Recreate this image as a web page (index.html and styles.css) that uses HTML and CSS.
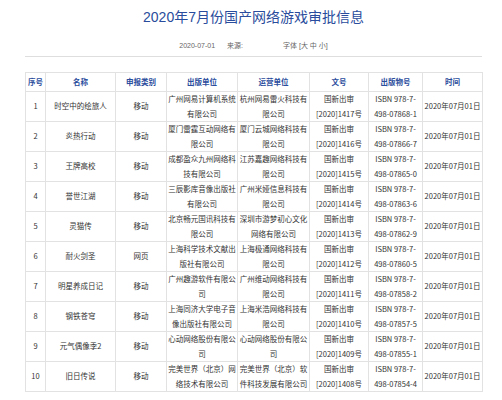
FILE: index.html
```html
<!DOCTYPE html>
<html lang="zh-CN">
<head>
<meta charset="utf-8">
<title>2020年7月份国产网络游戏审批信息</title>
<link rel="stylesheet" href="styles.css">
</head>
<body>
<div class="page">
  <h1 class="title">2020年7月份国产网络游戏审批信息</h1>
  <div class="meta">
    <span class="date">2020-07-01</span>
    <span class="source">来源:</span>
    <span class="fontsize">字体 [大 中 小]</span>
  </div>
  <table class="list">
    <colgroup>
      <col class="c1"><col class="c2"><col class="c3"><col class="c4"><col class="c5"><col class="c6"><col class="c7"><col class="c8">
    </colgroup>
    <thead>
      <tr><th>序号</th><th>名称</th><th>申报类别</th><th>出版单位</th><th>运营单位</th><th>文号</th><th>出版物号</th><th>时间</th></tr>
    </thead>
    <tbody>
      <tr><td>1</td><td>时空中的绘旅人</td><td>移动</td><td>广州网易计算机系统有限公司</td><td>杭州网易雷火科技有限公司</td><td>国新出审<br>[2020]1417号</td><td>ISBN 978-7-<br>498-07868-1</td><td>2020年07月01日</td></tr>
      <tr><td>2</td><td>炎热行动</td><td>移动</td><td>厦门雷霆互动网络有限公司</td><td>厦门云城网络科技有限公司</td><td>国新出审<br>[2020]1416号</td><td>ISBN 978-7-<br>498-07866-7</td><td>2020年07月01日</td></tr>
      <tr><td>3</td><td>王牌高校</td><td>移动</td><td>成都盈众九州网络科技有限公司</td><td>江苏嘉趣网络科技有限公司</td><td>国新出审<br>[2020]1415号</td><td>ISBN 978-7-<br>498-07865-0</td><td>2020年07月01日</td></tr>
      <tr><td>4</td><td>誉世江湖</td><td>移动</td><td>三辰影库音像出版社有限公司</td><td>广州米娅信息科技有限公司</td><td>国新出审<br>[2020]1414号</td><td>ISBN 978-7-<br>498-07863-6</td><td>2020年07月01日</td></tr>
      <tr><td>5</td><td>灵猫传</td><td>移动</td><td>北京畅元国讯科技有限公司</td><td>深圳市游梦初心文化网络有限公司</td><td>国新出审<br>[2020]1413号</td><td>ISBN 978-7-<br>498-07862-9</td><td>2020年07月01日</td></tr>
      <tr><td>6</td><td>耐火剑圣</td><td>网页</td><td>上海科学技术文献出版社有限公司</td><td>上海极通网络科技有限公司</td><td>国新出审<br>[2020]1412号</td><td>ISBN 978-7-<br>498-07860-5</td><td>2020年07月01日</td></tr>
      <tr><td>7</td><td>明星养成日记</td><td>移动</td><td>广州趣游软件有限公司</td><td>广州维动网络科技有限公司</td><td>国新出审<br>[2020]1411号</td><td>ISBN 978-7-<br>498-07858-2</td><td>2020年07月01日</td></tr>
      <tr><td>8</td><td>钢铁苍穹</td><td>移动</td><td>上海同济大学电子音像出版社有限公司</td><td>上海米浩网络科技有限公司</td><td>国新出审<br>[2020]1410号</td><td>ISBN 978-7-<br>498-07857-5</td><td>2020年07月01日</td></tr>
      <tr><td>9</td><td>元气偶像季2</td><td>移动</td><td>心动网络股份有限公司</td><td>心动网络股份有限公司</td><td>国新出审<br>[2020]1409号</td><td>ISBN 978-7-<br>498-07855-1</td><td>2020年07月01日</td></tr>
      <tr><td>10</td><td>旧日传说</td><td>移动</td><td>完美世界（北京）网络技术有限公司</td><td>完美世界（北京）软件科技发展有限公司</td><td>国新出审<br>[2020]1408号</td><td>ISBN 978-7-<br>498-07854-4</td><td>2020年07月01日</td></tr>
    </tbody>
  </table>
</div>
</body>
</html>
```

FILE: styles.css
```css
html, body {
  margin: 0;
  padding: 0;
  background: #ffffff;
}

body {
  font-family: "Liberation Sans", "Noto Sans CJK SC", sans-serif;
  color: #333333;
}

.page {
  width: 457px;
  margin-left: 25px;
  padding-top: 7px;
}

.title {
  margin: 0;
  font-size: 14px;
  line-height: 20px;
  font-weight: normal;
  color: #2a4c9c;
  text-align: center;
}

.meta {
  display: flex;
  justify-content: center;
  align-items: center;
  margin-top: 13px;
  padding-bottom: 4px;
  border-bottom: 1px solid #dedede;
  font-size: 7px;
  line-height: 12px;
  color: #666666;
}

.source {
  margin-left: 12px;
}

.fontsize {
  margin-left: 40px;
}

.list {
  margin-top: 15px;
  width: 457px;
  border-collapse: collapse;
  table-layout: fixed;
  font-family: "Noto Sans CJK SC", "Liberation Sans", sans-serif;
  font-size: 7.5px;
}

.c1 { width: 20px; }
.c2 { width: 70px; }
.c3 { width: 51px; }
.c4 { width: 71px; }
.c5 { width: 72px; }
.c6 { width: 59px; }
.c7 { width: 54px; }
.c8 { width: 60px; }

.list th,
.list td {
  border: 1px solid #e2e2e2;
  text-align: center;
  vertical-align: middle;
  padding: 0 1px;
  overflow: hidden;
  white-space: normal;
  word-break: break-all;
}

.list th {
  height: 18px;
  line-height: 12px;
  color: #2a4c9c;
  font-weight: bold;
}

.list td {
  height: 29px;
  line-height: 14.5px;
  color: #333333;
}
```
